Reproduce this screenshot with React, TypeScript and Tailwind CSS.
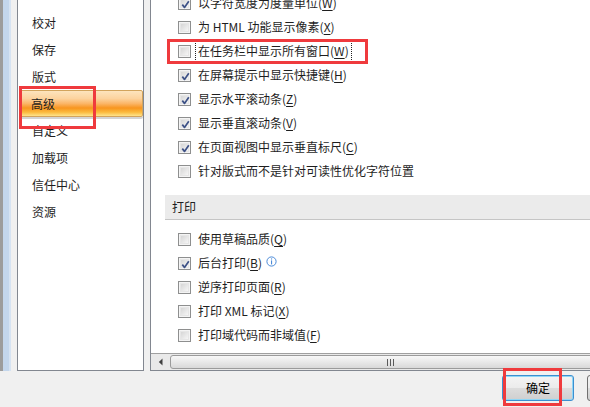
import React from "react";

type Item = { t: string; k?: string; on?: boolean; focus?: boolean; info?: boolean };

const view: Item[] = [
  { t: "以字符宽度为度量单位", k: "W", on: true },
  { t: "为 HTML 功能显示像素", k: "X" },
  { t: "在任务栏中显示所有窗口", k: "W", focus: true },
  { t: "在屏幕提示中显示快捷键", k: "H", on: true },
  { t: "显示水平滚动条", k: "Z", on: true },
  { t: "显示垂直滚动条", k: "V", on: true },
  { t: "在页面视图中显示垂直标尺", k: "C", on: true },
  { t: "针对版式而不是针对可读性优化字符位置" },
];

const print: Item[] = [
  { t: "使用草稿品质", k: "Q" },
  { t: "后台打印", k: "B", on: true, info: true },
  { t: "逆序打印页面", k: "R" },
  { t: "打印 XML 标记", k: "X" },
  { t: "打印域代码而非域值", k: "F" },
];

const nav = ["校对", "保存", "版式", "高级", "自定义", "加载项", "信任中心", "资源"];

function Box({ on }: { on?: boolean }) {
  return (
    <span className="relative w-[13px] h-[13px] shrink-0 border border-[#8e8f8f] bg-[#f4f4f4] p-[1px]">
      <span className="block w-full h-full border border-[#e6e6e6] bg-gradient-to-br from-[#d6d6d6] to-[#f6f6f6]" />
      {on && (
        <svg className="absolute left-[1px] top-[1px]" width="11" height="11" viewBox="0 0 11 11">
          <path d="M2.3 5.6 L4.5 8.4 L8.8 2.2" fill="none" stroke="#3d5186" strokeWidth="1.7" strokeLinejoin="round" />
        </svg>
      )}
    </span>
  );
}

function Row({ it }: { it: Item }) {
  return (
    <div className="h-[24px] flex items-center pl-[13px] gap-[6px]">
      <Box on={it.on} />
      <span
        className={
          "whitespace-nowrap leading-[18px] px-[1px] " +
          (it.focus ? "outline outline-1 outline-dotted outline-[#222] outline-offset-[1px]" : "")
        }
      >
        {it.t}
        {it.k && (
          <>
            (<span className="underline underline-offset-2">{it.k}</span>)
          </>
        )}
      </span>
      {it.info && (
        <svg className="-ml-[3px] -mt-[4px]" width="11" height="11" viewBox="0 0 11 11">
          <circle cx="5.5" cy="5.5" r="4.6" fill="#fff" stroke="#4a8ad8" strokeWidth="1" />
          <rect x="5" y="2.4" width="1.1" height="1.1" fill="#4a8ad8" />
          <rect x="5" y="4.4" width="1.1" height="4" fill="#4a8ad8" />
        </svg>
      )}
    </div>
  );
}

export default function App() {
  return (
    <div className="relative w-[590px] h-[407px] overflow-hidden bg-[#f0f0f0] text-[12px] text-[#1e1e1e] font-['Noto_Sans_CJK_SC',sans-serif]">
      <div className="flex h-[371px]">
        {/* window edge */}
        <div className="w-[3px] shrink-0 bg-[#9c9c9c]" />
        <div className="w-[8px] shrink-0 bg-[#c3d6ec] border-r-2 border-[#d6e3f2]" />
        <div className="w-[6px] shrink-0" />

        {/* nav */}
        <div className="w-[127px] shrink-0 bg-white border-x border-b border-[#828790] pt-[9px]">
          {nav.map((n) =>
            n === "高级" ? (
              <div
                key={n}
                className="h-[27px] ml-[2px] pl-[10px] flex items-center rounded-[2px] border border-[#d2a45c] bg-[linear-gradient(to_bottom,#fde4bd_0%,#fcd39e_30%,#fbb668_50%,#f8951f_68%,#fbbb3f_85%,#fee48d_100%)] shadow-[0_2px_0_#d4d4d4]"
              >
                {n}
              </div>
            ) : (
              <div key={n} className="h-[27px] pl-[14px] flex items-center">
                {n}
              </div>
            )
          )}
        </div>

        <div className="w-[6px] shrink-0" />

        {/* main panel */}
        <div className="flex-1 min-w-0 flex flex-col bg-white border-l border-b border-[#828790]">
          <div className="flex-1 overflow-hidden pl-[14px]">
            <div className="-mt-[9px]">
              {view.map((it, i) => (
                <Row key={i} it={it} />
              ))}
            </div>
            <div className="mt-[12px] h-[25px] flex items-center pl-[7px] bg-[#ebebeb] border-b border-[#c5c5c5]">
              打印
            </div>
            <div className="mt-[7px]">
              {print.map((it, i) => (
                <Row key={i} it={it} />
              ))}
            </div>
          </div>

          {/* horizontal scrollbar */}
          <div className="h-[17px] flex overflow-hidden border-t border-[#a0a0a0] bg-[#e9e9e9]">
            <div className="w-[19px] shrink-0 flex items-center justify-center">
              <svg width="6" height="8" viewBox="0 0 6 8">
                <path d="M4.5 0.5 L0.8 4 L4.5 7.5 Z" fill="#404040" />
              </svg>
            </div>
            <div className="w-[440px] shrink-0 mt-[1px] h-[14px] rounded-l-[3px] border border-[#9b9b9b] bg-gradient-to-b from-[#f8f8f8] to-[#d9d9d9] flex items-center justify-center">
              <div className="flex gap-[2px]">
                <span className="w-[1px] h-[7px] bg-[#5a5a5a]" />
                <span className="w-[1px] h-[7px] bg-[#5a5a5a]" />
                <span className="w-[1px] h-[7px] bg-[#5a5a5a]" />
              </div>
            </div>
          </div>
        </div>
      </div>

      {/* buttons */}
      <div className="flex gap-[13px] pl-[502px] pt-[4px]">
        <button className="shrink-0 w-[72px] h-[26px] rounded-[3px] border border-[#3c8fd0] shadow-[inset_0_0_0_1px_#8fd6f6] bg-[linear-gradient(to_bottom,#f4f4f4_0%,#ebebeb_50%,#dcdcdc_52%,#cfcfcf_100%)] text-[12px] text-black">
          确定
        </button>
        <button className="shrink-0 w-[72px] h-[26px] rounded-[3px] border border-[#707070] bg-[linear-gradient(to_bottom,#f2f2f2_0%,#ebebeb_50%,#dddddd_52%,#cfcfcf_100%)] text-[12px] text-black">
          取消
        </button>
      </div>

      {/* annotation boxes */}
      <div className="absolute left-[19px] top-[86px] w-[77px] h-[43px] border-[3px] border-[#ef3a3d]" />
      <div className="absolute left-[167px] top-[39px] w-[201px] h-[25px] border-[3px] border-[#ef3a3d]" />
      <div className="absolute left-[503px] top-[368px] w-[59px] h-[38px] border-[3px] border-[#ef3a3d]" />
    </div>
  );
}
